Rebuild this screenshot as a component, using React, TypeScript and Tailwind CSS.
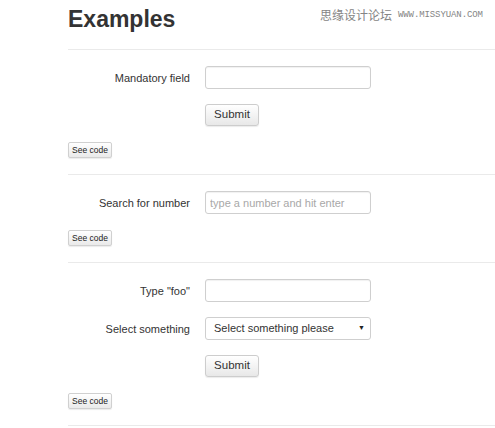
import { ChangeEvent, useState } from 'react';

const font = "font-['Liberation_Sans',Arial,sans-serif]";

function Field({ label, children }: { label: string; children: React.ReactNode }) {
  return (
    <div className="flex h-[23px] items-center gap-[15px]">
      <label className="w-[122px] text-right text-[11px] leading-[14px] text-[#333]">{label}</label>
      {children}
    </div>
  );
}

function TextInput({ placeholder }: { placeholder?: string }) {
  const [value, setValue] = useState('');
  return (
    <input
      value={value}
      onChange={(e: ChangeEvent<HTMLInputElement>) => setValue(e.target.value)}
      placeholder={placeholder}
      className="block h-[23px] w-[166px] rounded-[3px] border border-[#cfcfcf] bg-white px-[4px] text-[11px] text-[#333] shadow-[inset_0_1px_1px_rgba(0,0,0,0.06)] outline-none placeholder:text-[#a8a8a8]"
    />
  );
}

function SubmitButton() {
  return (
    <div className="flex pl-[137px]">
      <button className="block h-[22px] w-[54px] rounded-[3px] border border-[#cdcdcd] bg-gradient-to-b from-white to-[#e8e8e8] text-[11.5px] text-[#333] shadow-[0_1px_1px_rgba(0,0,0,0.08)]">
        Submit
      </button>
    </div>
  );
}

function SeeCode() {
  return (
    <button className="mt-[16px] block h-[16px] w-[44px] rounded-[2px] border border-[#d0d0d0] bg-gradient-to-b from-white to-[#eaeaea] text-[8.5px] leading-none text-[#222] shadow-[0_1px_1px_rgba(0,0,0,0.08)]">
      See code
    </button>
  );
}

function Section({ children }: { children: React.ReactNode }) {
  return (
    <section className="border-b border-[#eaeaea] pt-[16px] pb-[16px]">
      <div className="flex flex-col gap-[15px]">{children}</div>
      <SeeCode />
    </section>
  );
}

export default function App() {
  return (
    <div className={`relative h-[428px] w-[495px] overflow-hidden bg-white ${font}`}>
      {/* watermark */}
      <div className="absolute left-[320px] top-[8px] flex items-center gap-[6px] text-[#858585]">
        <span className="font-['Noto_Sans_CJK_SC',sans-serif] text-[12px] leading-[14px]">思缘设计论坛</span>
        <span className="font-['Liberation_Mono',monospace] text-[9px] leading-[14px] tracking-[-0.1px]">WWW.MISSYUAN.COM</span>
      </div>

      <div className="pl-[68px]">
        <h1 className="border-b border-[#eaeaea] pt-[5px] pb-[16px] text-[23px] font-bold leading-[28px] text-[#333]">
          Examples
        </h1>

        <Section>
          <Field label="Mandatory field">
            <TextInput />
          </Field>
          <SubmitButton />
        </Section>

        <Section>
          <Field label="Search for number">
            <TextInput placeholder="type a number and hit enter" />
          </Field>
        </Section>

        <Section>
          <Field label={'Type "foo"'}>
            <TextInput />
          </Field>
          <Field label="Select something">
            <div className="relative flex">
              <select className="block h-[23px] w-[166px] appearance-none rounded-[3px] border border-[#cfcfcf] bg-white pl-[8px] text-[11px] text-[#333] outline-none">
                <option>Select something please</option>
                <option>foo</option>
                <option>bar</option>
              </select>
              <span className="pointer-events-none absolute right-[6px] top-[6px] text-[7px] leading-[10px] text-[#222]">▼</span>
            </div>
          </Field>
          <SubmitButton />
        </Section>
      </div>
    </div>
  );
}
